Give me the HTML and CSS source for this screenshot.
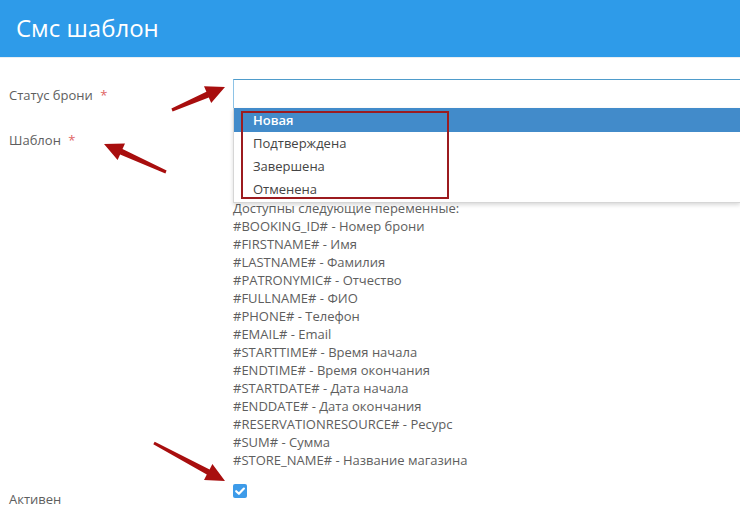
FILE: index.html
```html
<!DOCTYPE html>
<html lang="ru">
<head>
  <meta charset="UTF-8">
  <meta name="viewport" content="width=device-width, initial-scale=1.0">
  <title>Смс шаблон</title>
  <link rel="stylesheet" href="styles.css">
</head>
<body>
  <header class="page-header">
    <h1>Смс шаблон</h1>
  </header>

  <form class="form">
    <div class="form-row">
      <label class="form-label">Статус брони <span class="req">*</span></label>
      <div class="form-field">
        <div class="select-box"></div>
        <ul class="dropdown">
          <li class="active">Новая</li>
          <li>Подтверждена</li>
          <li>Завершена</li>
          <li>Отменена</li>
        </ul>
        <div class="mark-box"></div>
      </div>
    </div>

    <div class="form-row">
      <label class="form-label">Шаблон <span class="req">*</span></label>
      <div class="form-field">
        <textarea class="template"></textarea>
        <div class="help">
          Доступны следующие переменные:<br>
          #BOOKING_ID# - Номер брони<br>
          #FIRSTNAME# - Имя<br>
          #LASTNAME# - Фамилия<br>
          #PATRONYMIC# - Отчество<br>
          #FULLNAME# - ФИО<br>
          #PHONE# - Телефон<br>
          #EMAIL# - Email<br>
          #STARTTIME# - Время начала<br>
          #ENDTIME# - Время окончания<br>
          #STARTDATE# - Дата начала<br>
          #ENDDATE# - Дата окончания<br>
          #RESERVATIONRESOURCE# - Ресурс<br>
          #SUM# - Сумма<br>
          #STORE_NAME# - Название магазина
        </div>
      </div>
    </div>

    <div class="form-row">
      <label class="form-label form-label-check">Активен</label>
      <div class="form-field">
        <span class="checkbox">
          <svg width="14" height="14" viewBox="0 0 14 14"><path d="M3.2 7.2 L5.9 9.8 L10.9 4.6" fill="none" stroke="#fff" stroke-width="2.2" stroke-linecap="round" stroke-linejoin="round"/></svg>
        </span>
      </div>
    </div>
  </form>

  <!-- annotation arrows -->
  <svg class="arrows" width="740" height="532" viewBox="0 0 740 532">
    <polygon points="172.6,111.4 208.8,97.4 211.2,102.9 225,87 204,86.3 206.4,91.8 171.4,108.6"/>
    <polygon points="166.6,170.6 122.5,149.1 125,143.6 104,144 117.6,160 120.1,154.5 165.4,173.4"/>
    <polygon points="153.3,444.3 206.8,474.6 204,479.9 225,481 212.4,464.1 209.6,469.4 154.7,441.7"/>
  </svg>
</body>
</html>
```

FILE: styles.css
```css
html,
body {
  overflow: hidden;
}

body {
  font-family: "Open Sans", "Noto Sans", sans-serif;
  font-size: 13px;
  color: #5e5e5e;
  margin: 0;
  padding: 0;
  background-color: #fff;
  position: relative;
}

.page-header {
  background-color: #2e9be9;
  height: 57px;
  border-bottom: 1px solid #e8eef3;
  padding: 0 16px;
  display: flex;
  align-items: center;
}

.page-header h1 {
  margin: 0;
  color: #fff;
  font-size: 24px;
  font-weight: 400;
  line-height: 30px;
  padding-bottom: 2px;
}

.form {
  padding: 21px 0 0 9px;
}

.form-row {
  display: flex;
  margin-bottom: 15px;
}

.form-label {
  flex: none;
  width: 224px;
  padding-top: 7px;
  line-height: 18px;
}

.form-label-check {
  padding-top: 6px;
}

.req {
  color: #e06565;
  margin-left: 4px;
}

.form-field {
  flex: 1;
  position: relative;
}

.select-box {
  height: 30px;
  box-sizing: border-box;
  border: 1px solid #8ec3e6;
  border-top-color: #4f9ccb;
  border-right: none;
}

.dropdown {
  position: absolute;
  top: 29px;
  left: 0;
  right: 0;
  margin: 0;
  padding: 0 0 1px;
  list-style: none;
  background-color: #fff;
  border: 1px solid #d6d6d6;
  border-top: none;
  border-right: none;
  box-shadow: 0 2px 4px rgba(0, 0, 0, 0.15);
  z-index: 2;
}

.dropdown li {
  height: 23px;
  line-height: 23px;
  padding: 0 19px;
  color: #444;
}

.dropdown li.active {
  background-color: #428bca;
  color: #fff;
  font-weight: 600;
  height: 24px;
  line-height: 24px;
}

.mark-box {
  position: absolute;
  top: 32px;
  left: 8px;
  width: 208px;
  height: 88px;
  box-sizing: border-box;
  border: 2px solid #9c1b1f;
  z-index: 3;
}

.template {
  display: block;
  width: 100%;
  height: 75px;
  box-sizing: border-box;
  border: 1px solid #ccc;
  border-right: none;
  margin: 0;
  resize: none;
}

.help {
  line-height: 18px;
  color: #5e5e5e;
}

.checkbox {
  display: inline-flex;
  width: 14px;
  height: 14px;
  border-radius: 2px;
  background-color: #3d9be9;
}

.arrows {
  position: absolute;
  top: 0;
  left: 0;
  pointer-events: none;
  z-index: 5;
}

.arrows polygon {
  fill: #a80e0e;
}
```
